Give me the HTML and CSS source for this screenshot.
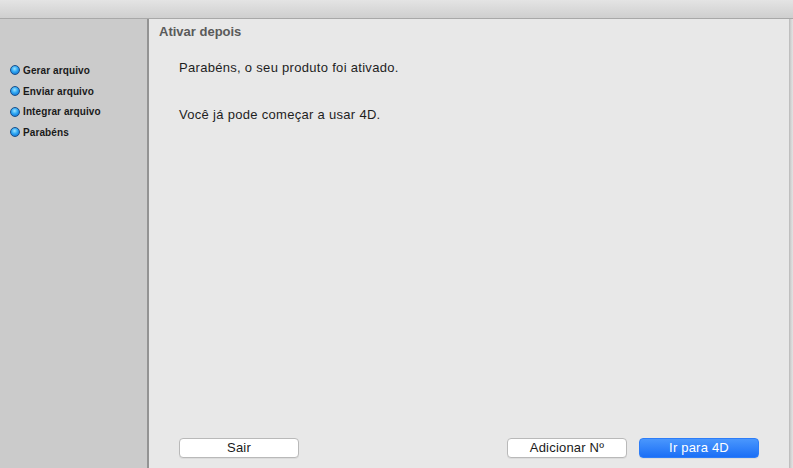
FILE: index.html
```html
<!DOCTYPE html>
<html lang="pt">
<head>
<meta charset="utf-8">
<title>Ativar</title>
<link rel="stylesheet" href="styles.css">
</head>
<body>
<div class="window">
  <div class="toolbar"></div>
  <div class="content">
    <aside class="sidebar">
      <ul class="steps">
        <li class="step"><span class="dot"></span>Gerar arquivo</li>
        <li class="step"><span class="dot"></span>Enviar arquivo</li>
        <li class="step"><span class="dot"></span>Integrar arquivo</li>
        <li class="step"><span class="dot"></span>Parabéns</li>
      </ul>
    </aside>
    <main class="main">
      <h1 class="title">Ativar depois</h1>
      <p class="msg msg-first">Parabéns, o seu produto foi ativado.</p>
      <p class="msg msg-second">Você já pode começar a usar 4D.</p>
      <div class="buttons">
        <button class="btn">Sair</button>
        <div class="spacer"></div>
        <button class="btn">Adicionar Nº</button>
        <button class="btn btn-primary">Ir para 4D</button>
      </div>
    </main>
    <div class="edge"></div>
  </div>
</div>
</body>
</html>
```

FILE: styles.css
```css
* { box-sizing: border-box; }
html, body {
  margin: 0;
  padding: 0;
  width: 793px;
  height: 468px;
  overflow: hidden;
  background: #e8e8e8;
  font-family: "Liberation Sans", Arial, sans-serif;
}
.window {
  display: flex;
  flex-direction: column;
  height: 468px;
}
.toolbar {
  height: 19px;
  background: linear-gradient(#e4e4e4, #cfcfcf);
  border-bottom: 1px solid #a8a8a8;
  flex: none;
}
.content {
  display: flex;
  flex: 1;
  min-height: 0;
}
.sidebar {
  width: 149px;
  flex: none;
  background: #cbcbcb;
  border-right: 2px solid #939393;
}
.steps {
  list-style: none;
  margin: 0;
  padding: 41px 0 0 10px;
}
.step {
  display: flex;
  align-items: center;
  height: 20.7px;
  font-size: 10px;
  font-weight: bold;
  color: #1a1a1a;
  letter-spacing: 0.1px;
}
.dot {
  width: 10px;
  height: 10px;
  border-radius: 50%;
  margin-right: 3px;
  background: radial-gradient(circle at 45% 35%, #9be3ff 0%, #2ea6f2 45%, #0a62c4 100%);
  border: 1px solid #1b4f8a;
  flex: none;
}
.main {
  flex: 1;
  display: flex;
  flex-direction: column;
  padding: 0 0 0 10px;
  background: #e8e8e8;
}
.title {
  margin: 0;
  font-size: 13px;
  font-weight: bold;
  color: #5a5a5a;
  line-height: 16px;
  padding-top: 5px;
}
.msg {
  margin: 0;
  font-size: 13px;
  color: #1e1e1e;
  line-height: 16px;
  padding-left: 20px;
  letter-spacing: 0.3px;
}
.msg-first { margin-top: 20px; }
.msg-second { margin-top: 31px; }
.buttons {
  margin-top: auto;
  display: flex;
  align-items: center;
  padding: 0 0 10px 20px;
}
.spacer { flex: 1; }
.btn {
  width: 120px;
  height: 20px;
  font-family: "Liberation Sans", Arial, sans-serif;
  font-size: 13px;
  line-height: 18px;
  color: #1a1a1a;
  background: #ffffff;
  border: 1px solid #b9b9b9;
  border-radius: 4px;
  padding: 0;
  letter-spacing: 0.2px;
  box-shadow: 0 1px 0 rgba(0,0,0,0.05);
}
.btn + .btn { margin-left: 12px; }
.btn-primary {
  background: linear-gradient(#4a97fd, #1b6ff6);
  border-color: #2d7df8;
  color: #ffffff;
}
.buttons .btn:last-child { margin-right: 30px; }
.edge {
  width: 4px;
  flex: none;
  background: linear-gradient(90deg, #b8b8b8, #d4d4d4, #e2e2e2);
}
```
